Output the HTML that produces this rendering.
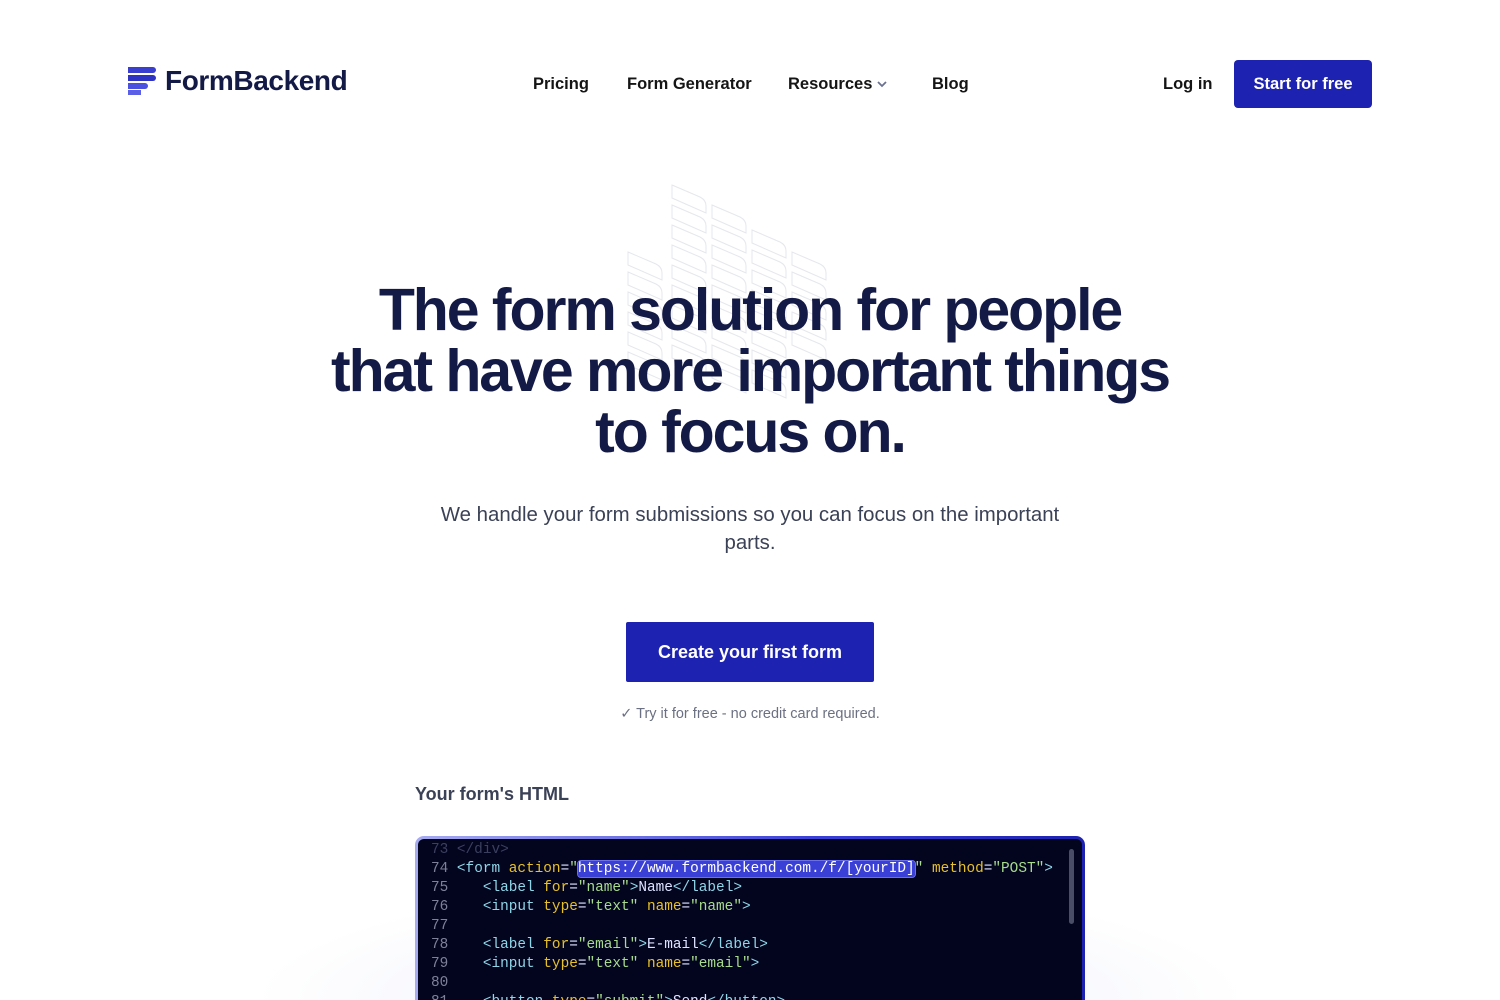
<!DOCTYPE html>
<html style="width:1500px;height:1000px;overflow:hidden"><head><meta charset="utf-8"><style>
*{margin:0;padding:0;box-sizing:border-box}
body{width:1500px;height:1000px;overflow:hidden;background:#fff;font-family:"Liberation Sans",sans-serif;position:relative;color:#141a46}
.abs{position:absolute}
.nav a{position:absolute;top:75px;font-size:16.5px;font-weight:bold;color:#151515;text-decoration:none;white-space:nowrap}
h1{position:absolute;left:0;width:1500px;top:280px;text-align:center;font-size:59px;line-height:61px;letter-spacing:-2.05px;font-weight:bold;color:#141a46}
.code{position:absolute;left:415px;top:836px;width:670px;height:200px;border-radius:9px;padding:3px;background:linear-gradient(90deg,#a7abf0,#3a3fd6 60%,#1d22b0)}
.code .in{background:#03051f;border-radius:6px;height:100%;font-family:"Liberation Mono",monospace;font-size:14.4px;line-height:19px;color:#dfe3ff;padding:2px 0 0 13px;white-space:pre;position:relative}
.ln{color:#7e8199}.t{color:#8fd6e8}.a{color:#e7c12a}.s{color:#a8dc8c}
</style></head><body>
<svg class="abs" style="left:127px;top:66px" width="30" height="30" viewBox="0 0 30 30">
<rect x="1" y="1" width="28" height="6" rx="3" fill="#3b3fd0"/><rect x="1" y="1" width="8" height="6" fill="#3b3fd0"/>
<rect x="1" y="9" width="28" height="6" rx="3" fill="#2f33c4"/><rect x="1" y="9" width="8" height="6" fill="#2f33c4"/>
<rect x="1" y="17" width="20" height="6" rx="3" fill="#4a50df"/><rect x="1" y="17" width="8" height="6" fill="#4a50df"/>
<rect x="1" y="24" width="13" height="5" fill="#5a5fe6"/></svg>
<div class="abs" style="left:165px;top:65px;font-size:28px;font-weight:bold;color:#141a46;letter-spacing:-0.4px">FormBackend</div>
<div class="nav">
<a style="left:533px">Pricing</a><a style="left:627px">Form Generator</a><a style="left:788px">Resources</a><a style="left:932px">Blog</a><a style="left:1163px">Log in</a>
</div>
<svg class="abs" style="left:876px;top:79px" width="12" height="10" viewBox="0 0 12 10"><path d="M2 3l4 4 4-4" stroke="#6b7290" stroke-width="1.8" fill="none"/></svg>
<div class="abs" style="left:1234px;top:60px;width:138px;height:48px;background:#1d22b0;border-radius:4px;color:#fff;font-size:16.5px;font-weight:bold;text-align:center;line-height:48px">Start for free</div>
<svg class="abs" style="left:620px;top:180px" width="220" height="240" viewBox="0 0 220 240" fill="none" stroke="#e6e7ec" stroke-width="1">
<defs><path id="b" d="M0 0 L28 12 Q34 15 34 21 L34 28 L0 13 Z"/></defs>
<g transform="translate(52,5)"><use href="#b"/><use href="#b" y="20"/><use href="#b" y="40"/><use href="#b" y="60"/><use href="#b" y="80"/><use href="#b" y="100"/><use href="#b" y="120"/><use href="#b" y="140"/><use href="#b" y="160"/></g>
<g transform="translate(92,25)"><use href="#b"/><use href="#b" y="20"/><use href="#b" y="40"/><use href="#b" y="60"/><use href="#b" y="80"/><use href="#b" y="100"/><use href="#b" y="120"/><use href="#b" y="140"/><use href="#b" y="160"/></g>
<g transform="translate(132,50)"><use href="#b"/><use href="#b" y="20"/><use href="#b" y="40"/><use href="#b" y="60"/><use href="#b" y="80"/><use href="#b" y="100"/><use href="#b" y="120"/><use href="#b" y="140"/></g>
<g transform="translate(172,72)"><use href="#b"/><use href="#b" y="20"/><use href="#b" y="40"/><use href="#b" y="60"/><use href="#b" y="80"/></g>
<g transform="translate(8,72)"><use href="#b"/><use href="#b" y="20"/><use href="#b" y="40"/><use href="#b" y="60"/><use href="#b" y="80"/><use href="#b" y="100"/></g>
</svg>
<h1>The form solution for people<br>that have more important things<br>to focus on.</h1>
<div class="abs" style="left:0;width:1500px;top:501px;text-align:center;font-size:20.4px;line-height:28px;color:#3b4156">We handle your form submissions so you can focus on the important<br>parts.</div>
<div class="abs" style="left:626px;top:622px;width:248px;height:60px;background:#1d22b0;border-radius:2px;color:#fff;font-size:18px;font-weight:bold;text-align:center;line-height:60px">Create your first form</div>
<div class="abs" style="left:0;width:1500px;top:706px;text-align:center;font-size:14.5px;color:#6b7082">✓ Try it for free - no credit card required.</div>
<div class="abs" style="left:415px;top:784px;font-size:18px;font-weight:bold;color:#3b4156">Your form's HTML</div>
<div class="abs" style="left:250px;top:880px;width:1000px;height:120px;background:radial-gradient(ellipse at 50% 100%,rgba(200,205,240,.35),rgba(255,255,255,0) 70%)"></div>
<div class="code"><div class="in"><span style="color:#3c3f5e">73 &lt;/div&gt;</span>
<span class="ln">74</span> <span class="t">&lt;form</span> <span class="a">action</span>=<span class="s">"</span><span style="background:#3a3fd6;color:#fff;border-radius:3px;outline:1px solid #6a6ff0">https://www.formbackend.com./f/[yourID]</span><span class="s">"</span> <span class="a">method</span>=<span class="s">"POST"</span><span class="t">&gt;</span>
<span class="ln">75</span>    <span class="t">&lt;label</span> <span class="a">for</span>=<span class="s">"name"</span><span class="t">&gt;</span>Name<span class="t">&lt;/label&gt;</span>
<span class="ln">76</span>    <span class="t">&lt;input</span> <span class="a">type</span>=<span class="s">"text"</span> <span class="a">name</span>=<span class="s">"name"</span><span class="t">&gt;</span>
<span class="ln">77</span>
<span class="ln">78</span>    <span class="t">&lt;label</span> <span class="a">for</span>=<span class="s">"email"</span><span class="t">&gt;</span>E-mail<span class="t">&lt;/label&gt;</span>
<span class="ln">79</span>    <span class="t">&lt;input</span> <span class="a">type</span>=<span class="s">"text"</span> <span class="a">name</span>=<span class="s">"email"</span><span class="t">&gt;</span>
<span class="ln">80</span>
<span class="ln">81</span>    <span class="t">&lt;button</span> <span class="a">type</span>=<span class="s">"submit"</span><span class="t">&gt;</span>Send<span class="t">&lt;/button&gt;</span>
<div style="position:absolute;right:8px;top:10px;width:5px;height:75px;background:#4a4d66;border-radius:3px"></div></div></div>
</body></html>
